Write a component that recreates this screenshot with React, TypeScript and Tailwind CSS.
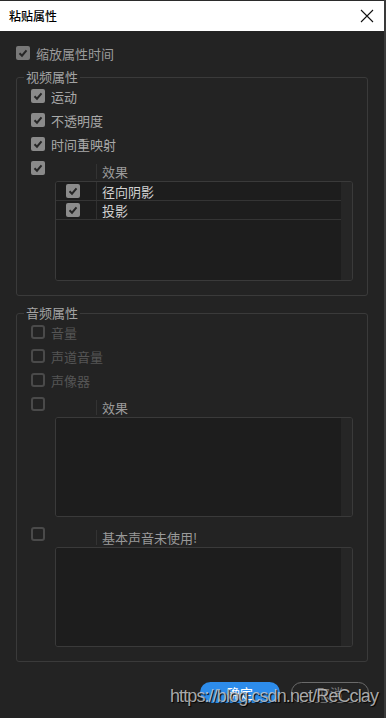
import React from 'react';

const font = { fontFamily: '"Noto Sans CJK SC", "Noto Sans", sans-serif' };

function Box({ checked, tone = 'bg-[#8a8a8a]' }: { checked: boolean; tone?: string }) {
  if (!checked) {
    return <div className="w-[14px] h-[14px] shrink-0 rounded-[3px] border-2 border-[#4a4a4a]" />;
  }
  return (
    <div className={`w-[14px] h-[14px] shrink-0 rounded-[2px] ${tone} flex items-center justify-center`}>
      <svg width="14" height="14" viewBox="0 0 14 14">
        <polyline points="3.5,7.2 6,9.7 10.5,4.3" fill="none" stroke="#262626" strokeWidth="2" />
      </svg>
    </div>
  );
}

function Row({ checked, label, dim }: { checked: boolean; label: string; dim?: boolean }) {
  return (
    <div className="h-[24px] flex items-center pl-[14px]">
      <Box checked={checked} />
      <span className={`ml-[6px] text-[13px] leading-none ${dim ? 'text-[#555555]' : 'text-[#a9a9a9]'}`}>{label}</span>
    </div>
  );
}

function HeaderRow({ checked, label }: { checked: boolean; label: string }) {
  return (
    <div className="h-[24px] flex items-center pl-[14px]">
      <Box checked={checked} />
      <div className="ml-[51px] mt-[7px] h-[15px] border-l border-[#333333] pl-[5px] flex items-center">
        <span className="text-[13px] leading-none text-[#9a9a9a]">{label}</span>
      </div>
    </div>
  );
}

function List({ items }: { items: string[] }) {
  return (
    <div className="ml-[38px] mr-[14px] h-[100px] border border-[#3a3a3a] rounded-[3px] flex overflow-hidden">
      <div className="flex-1 bg-[#1d1d1d]">
        {items.map((it) => (
          <div key={it} className="h-[19px] flex border-b border-[#343434]">
            <div className="w-[40px] flex items-center pl-[10px]">
              <Box checked tone="bg-[#8c8c8c]" />
            </div>
            <div className="border-l border-[#303030] pl-[5px] flex items-center">
              <span className="text-[13px] leading-none text-[#d2d2d2]">{it}</span>
            </div>
          </div>
        ))}
      </div>
      <div className="w-[11px] bg-[#262626]" />
    </div>
  );
}

function Group({ title, children }: { title: string; children: React.ReactNode }) {
  return (
    <fieldset className="mx-[16px] border border-[#3a3a3a] rounded-[3px] pb-[14px]">
      <legend className="ml-[7px] px-[2px] h-[16px] leading-[16px] text-[13px] text-[#a3a3a3]">{title}</legend>
      <div className="-mt-px">{children}</div>
    </fieldset>
  );
}

export default function App() {
  return (
    <div className="w-[386px] h-[718px] bg-[#232323] relative overflow-hidden border-r-2 border-[#3a3a3a]" style={font}>
      {/* Title bar */}
      <div className="h-[31px] bg-white border-t border-[#2b2b2b] flex items-center justify-between pl-[9px] pr-[10px]">
        <span className="text-[12px] text-black font-medium">粘贴属性</span>
        <svg width="14" height="14" viewBox="0 0 14 14">
          <path d="M1 1 L13 13 M13 1 L1 13" stroke="#111" strokeWidth="1.1" />
        </svg>
      </div>

      <div className="pt-[12px]">
        <div className="h-[20px] flex items-center pl-[16px]">
          <Box checked tone="bg-[#787878]" />
          <span className="ml-[6px] text-[13px] leading-none text-[#9b9b9b]">缩放属性时间</span>
        </div>

        <div className="mt-[6px]">
          <Group title="视频属性">
            <Row checked label="运动" />
            <Row checked label="不透明度" />
            <Row checked label="时间重映射" />
            <HeaderRow checked label="效果" />
            <div className="mt-[1px]">
              <List items={['径向阴影', '投影']} />
            </div>
          </Group>
        </div>

        <div className="mt-[9px]">
          <Group title="音频属性">
            <Row checked={false} label="音量" dim />
            <Row checked={false} label="声道音量" dim />
            <Row checked={false} label="声像器" dim />
            <HeaderRow checked={false} label="效果" />
            <div className="mt-[1px]">
              <List items={[]} />
            </div>
            <div className="mt-[5px]">
              <HeaderRow checked={false} label="基本声音未使用!" />
            </div>
            <div className="mt-[1px]">
              <List items={[]} />
            </div>
          </Group>
        </div>

        <div className="mt-[20px] flex justify-end gap-[11px] pr-[15px]">
          <button className="w-[80px] h-[21px] rounded-full bg-[#2d8ceb] text-white text-[13px] leading-none">确定</button>
          <button className="w-[78px] h-[21px] rounded-full border border-[#6a6a6a] text-[#7a7a7a] text-[13px] leading-none">取消</button>
        </div>
      </div>

      {/* watermark */}
      <div
        className="absolute left-[170px] top-[687px] text-[18px] tracking-[-0.9px] leading-none text-[#d0d0d0]/80 whitespace-nowrap [text-shadow:1px_1px_1px_#000]"
        style={{ fontFamily: '"Liberation Sans", Arial, sans-serif' }}
      >
        https://blog.csdn.net/ReCclay
      </div>
    </div>
  );
}
